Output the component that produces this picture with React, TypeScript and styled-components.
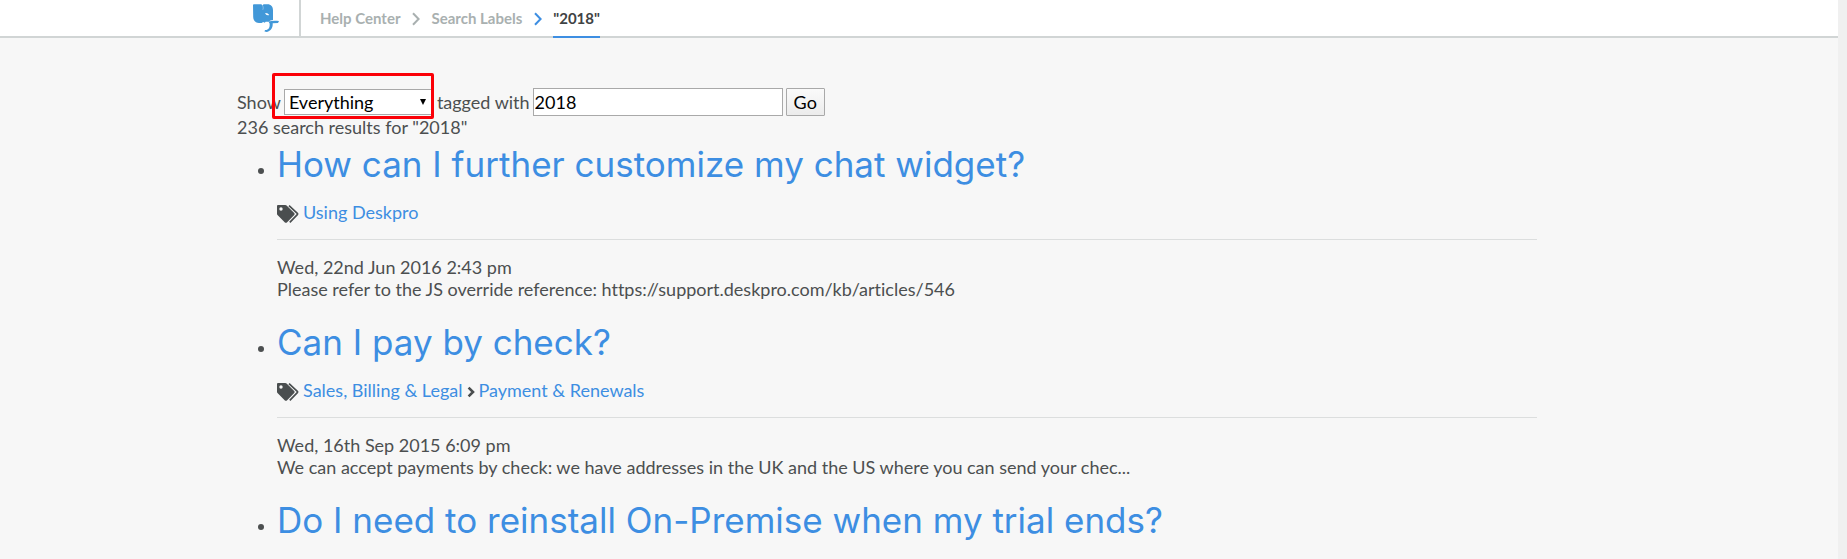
import React from "react";
import styled, { createGlobalStyle } from "styled-components";

const GlobalStyle = createGlobalStyle`
  * { box-sizing: border-box; }
  html { overflow: hidden; }
  body {
    margin: 0;
    background: #f7f7f7;
    color: #4c4f50;
    font: 18px/22px Lato, "Open Sans", sans-serif;
    font-variant-ligatures: none;
  }
  a { color: #3d8ee2; text-decoration: none; }
`;

const Page = styled.div`
  display: flex;
  height: 100vh;
  overflow: hidden;
`;

const Main = styled.div`
  flex: 1;
  min-width: 0;
`;

const ScrollTrack = styled.div`
  width: 9px;
  background: #f0f0f0;
`;

const Header = styled.header`
  height: 38px;
  background: #fff;
  border-bottom: 2px solid #d1d5d5;
`;

const Container = styled.div`
  max-width: 1364px;
  margin: 0 auto;
`;

const HeaderRow = styled(Container)`
  display: flex;
  height: 38px;
`;

const LogoLink = styled.a`
  display: block;
  width: 64px;
  height: 36px;
  padding: 4px 0 0 16px;
  border-right: 2px solid #d1d5d5;

  svg { display: block; }
`;

const Breadcrumbs = styled.nav`
  display: flex;
  align-items: stretch;
  margin-left: 19px;
  font-size: 15px;
  font-weight: 700;
  line-height: 36px;
`;

const Crumb = styled.a`
  color: #a9b0b0;
`;

const CurrentCrumb = styled.span`
  color: #3f4344;
  border-bottom: 2px solid #3d8ee2;
`;

const CrumbArrow = styled.svg<{ $active?: boolean }>`
  align-self: center;
  width: 8px;
  height: 14px;
  margin: 0 11px 0 12px;
  fill: none;
  stroke: ${(p) => (p.$active ? "#3d8ee2" : "#a9b0b0")};
  stroke-width: 2;
`;

const Content = styled(Container)`
  padding: 50px 64px 0 0;
`;

const SearchForm = styled.form`
  display: flex;
  align-items: center;
  gap: 3px;
  height: 28px;
`;

const SelectBox = styled.div`
  position: relative;
  width: 150px;
  height: 26px;
`;

const Select = styled.select`
  appearance: none;
  width: 100%;
  height: 100%;
  padding: 0 20px 0 4px;
  border: 1px solid #a9a9a9;
  border-radius: 0;
  background: #fff;
  color: #000;
  font: inherit;
`;

const SelectArrow = styled.svg`
  position: absolute;
  top: 10px;
  right: 8px;
  width: 6px;
  height: 6px;
  pointer-events: none;
`;

const Highlight = styled.div`
  position: absolute;
  inset: -16px 0 -4px -12px;
  border: 3px solid #fb0007;
  border-radius: 2px;
  pointer-events: none;
`;

const TextInput = styled.input`
  width: 250px;
  height: 28px;
  padding: 0 1px;
  border: 1px solid #a9a9a9;
  background: #fff;
  color: #000;
  font: inherit;
`;

const GoButton = styled.button`
  height: 28px;
  padding: 0 7px;
  border: 1px solid #a9a9a9;
  border-radius: 1px;
  background: linear-gradient(#fafafa, #ececec);
  color: #000;
  font: inherit;
`;

const Summary = styled.p`
  margin: 0;
`;

const Results = styled.ul`
  margin: 0;
  padding-left: 40px;
`;

const Result = styled.li`
  margin-bottom: 16px;
`;

const Title = styled.h1`
  margin: 0 0 10px;
  font: 400 35px/53px Inter, Roboto, sans-serif;
`;

const Categories = styled.div`
  display: flex;
  align-items: center;
  gap: 4px;
  padding-bottom: 16px;
  border-bottom: 1px solid #dcdede;
`;

const TagsGlyph = styled.svg`
  width: 22px;
  height: 18px;
  margin-top: 4px;
`;

const CategoryArrow = styled.svg`
  width: 8px;
  height: 12px;
  margin-top: 4px;
`;

const Excerpt = styled.p`
  margin: 16px 0 0;
`;

const Logo = () => (
  <svg width="26" height="28" viewBox="0 0 26 28" aria-hidden="true">
    <path
      fill="#4298d8"
      d="M0 1C0 .5.400.2.900.2H8.400L9.400 1.600 10.600.2H14.500c3.500 0 5.500 2.400 5.500 6V16c-1.800.2-3.300.7-4.300 1.700h-3l-1 1-1.500-.6-1.600.8H6C2.400 18.600.2 16.400.2 13z"
    />
    <path fill="#fff" d="M12.200 9c1.700-.2 3.200.5 4 2-1.700.6-3.600 0-4-2z" />
    <path
      fill="none"
      stroke="#fff"
      strokeWidth=".7"
      d="M9.400 1.400c1 1.400 1 3 .4 4.400"
      opacity=".5"
    />
    <path
      fill="#4298d8"
      d="M15.400 17.600c3.300-.9 7-1 10.600-.5l-1 1.800-5.300.4c.3 4.500-1.900 7.800-5.800 8.700l-2.400-.6.5-1.300c3.700.1 5-2.500 4.600-6.500z"
    />
  </svg>
);

const TagsIcon = () => (
  <TagsGlyph viewBox="0 0 22 18" aria-hidden="true">
    <path
      fill="#4a4e4f"
      fillRule="evenodd"
      d="M1.200 0H8.300c.5 0 1 .2 1.300.5l7.600 7.600c.6.600.6 1.300 0 1.900l-7.300 7.400c-.6.600-1.400.6-2 0L.5 10C.2 9.700 0 9.200 0 8.700V1.200C0 .5.5 0 1.200 0zM4 2.300a1.700 1.700 0 1 0 0 3.400 1.700 1.700 0 0 0 0-3.400z"
    />
    <path
      fill="none"
      stroke="#4a4e4f"
      strokeWidth="1.700"
      d="M12 .6 20.300 8.400q.6.600 0 1.200L12.800 17.400"
    />
  </TagsGlyph>
);

const Arrow = ({ active }: { active?: boolean }) => (
  <CrumbArrow $active={active} viewBox="0 0 8 14" aria-hidden="true">
    <path d="M1 1.200 6.600 7 1 12.800" />
  </CrumbArrow>
);

type Article = {
  title: string;
  categories: string[];
  date: string;
  excerpt: string;
};

const articles: Article[] = [
  {
    title: "How can I further customize my chat widget?",
    categories: ["Using Deskpro"],
    date: "Wed, 22nd Jun 2016 2:43 pm",
    excerpt:
      "Please refer to the JS override reference: https://support.deskpro.com/kb/articles/546",
  },
  {
    title: "Can I pay by check?",
    categories: ["Sales, Billing & Legal", "Payment & Renewals"],
    date: "Wed, 16th Sep 2015 6:09 pm",
    excerpt:
      "We can accept payments by check: we have addresses in the UK and the US where you can send your chec...",
  },
  {
    title: "Do I need to reinstall On-Premise when my trial ends?",
    categories: [],
    date: "",
    excerpt: "",
  },
];

const ArticleResult = ({ article }: { article: Article }) => (
  <Result>
    <Title>
      <a href="#article">{article.title}</a>
    </Title>
    {article.categories.length > 0 && (
      <>
        <Categories>
          <TagsIcon />
          {article.categories.map((name, i) => (
            <React.Fragment key={name}>
              {i > 0 && (
                <CategoryArrow viewBox="0 0 8 12" aria-hidden="true">
                  <path
                    d="M1.600 1.600 6 6 1.600 10.400"
                    fill="none"
                    stroke="#4a4e4f"
                    strokeWidth="2.600"
                  />
                </CategoryArrow>
              )}
              <a href="#category">{name}</a>
            </React.Fragment>
          ))}
        </Categories>
        <Excerpt>
          {article.date}
          <br />
          {article.excerpt}
        </Excerpt>
      </>
    )}
  </Result>
);

export default function App() {
  return (
    <Page>
      <GlobalStyle />
      <Main>
        <Header>
          <HeaderRow>
            <LogoLink href="#home" aria-label="Deskpro">
              <Logo />
            </LogoLink>
            <Breadcrumbs aria-label="Breadcrumb">
              <Crumb href="#help">Help Center</Crumb>
              <Arrow />
              <Crumb href="#labels">Search Labels</Crumb>
              <Arrow active />
              <CurrentCrumb>"2018"</CurrentCrumb>
            </Breadcrumbs>
          </HeaderRow>
        </Header>
        <Content as="main">
          <SearchForm onSubmit={(e) => e.preventDefault()}>
            <label htmlFor="type">Show</label>
            <SelectBox>
              <Select id="type" defaultValue="everything">
                <option value="everything">Everything</option>
              </Select>
              <SelectArrow viewBox="0 0 6 6" aria-hidden="true">
                <path d="M0 0h6L3 6z" />
              </SelectArrow>
              <Highlight />
            </SelectBox>
            <label htmlFor="label">tagged with</label>
            <TextInput id="label" type="text" defaultValue="2018" />
            <GoButton type="submit">Go</GoButton>
          </SearchForm>
          <Summary>236 search results for "2018"</Summary>
          <Results>
            {articles.map((article) => (
              <ArticleResult key={article.title} article={article} />
            ))}
          </Results>
        </Content>
      </Main>
      <ScrollTrack />
    </Page>
  );
}
